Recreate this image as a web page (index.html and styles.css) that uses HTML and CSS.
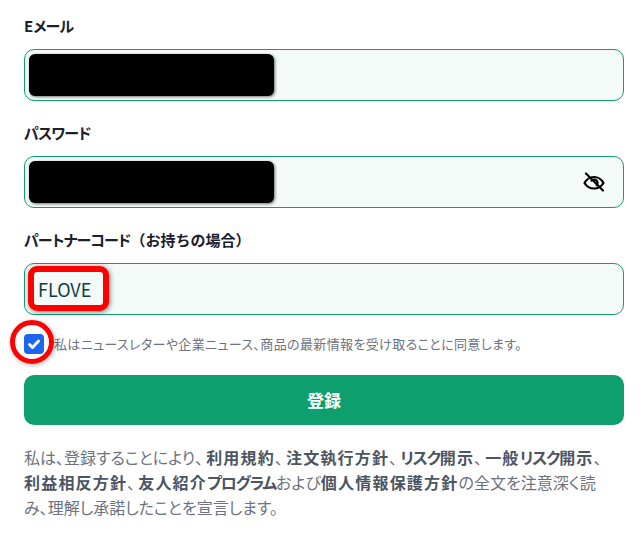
FILE: index.html
```html
<!DOCTYPE html>
<html lang="ja">
<head>
<meta charset="utf-8">
<title>登録</title>
<link rel="stylesheet" href="styles.css">
</head>
<body>
<form class="form">
  <div class="field">
    <label class="label">E<span class="kana">メール</span></label>
    <div class="input"><span class="redact"></span></div>
  </div>
  <div class="field">
    <label class="label"><span class="kana">パスワード</span></label>
    <div class="input">
      <span class="redact"></span>
      <svg class="eye" viewBox="0 0 24 24" width="24" height="24" fill="none" stroke="#000" stroke-width="2.200" stroke-linecap="round" stroke-linejoin="round">
        <path d="M2.500 13c2.200-4 5.500-6 9.500-6s7.300 2 9.500 6c-2.200 3.600-5.500 5.500-9.500 5.500s-7.300-1.900-9.500-5.500z"/>
        <path d="M9.500 10.700a3.400 3.400 0 0 1 5.200 4.600"/>
        <path d="M4 3.500 21 20.500"/>
      </svg>
    </div>
  </div>
  <div class="field">
    <label class="label"><span class="kana">パートナーコード</span>（お持ちの場合）</label>
    <div class="input code"><span class="code-text">FLOVE</span><span class="mark-box"></span></div>
  </div>
  <div class="consent">
    <span class="check">
      <svg viewBox="0 0 20 20" width="20" height="20" fill="none" stroke="#fff" stroke-width="3" stroke-linecap="round" stroke-linejoin="round"><path d="M5.500 10.500 8.500 13.500 14.500 7"/></svg>
      <span class="mark-circle"></span>
    </span>
    <span class="consent-text">私はニュースレターや企業ニュース、商品の最新情報を受け取ることに同意します。</span>
  </div>
  <button class="submit" type="button">登録</button>
  <p class="legal">私は、登録することにより<span class="sep">、</span><b>利用規約</b><span class="sep">、</span><b>注文執行方針</b><span class="sep">、</span><b><span class="kana">リスク</span>開示</b><span class="sep">、</span><b>一般<span class="kana">リスク</span>開示</b><span class="sep">、</span><b>利益相反方針</b><span class="sep">、</span><b>友人紹介<span class="kana">プログラム</span></b>および<b>個人情報保護方針</b>の全文を注意深く読み、理解し承諾したことを宣言します。</p>
</form>
</body>
</html>
```
FILE: styles.css
```css
* { box-sizing: border-box; }
html, body { margin: 0; padding: 0; background: #fff; }
body {
  width: 643px;
  height: 536px;
  overflow: hidden;
  font-family: "Noto Sans CJK JP", "Noto Sans", sans-serif;
  font-feature-settings: "palt";
}
.form { padding: 16px 19px 0 24px; }
.label {
  display: block;
  height: 33px;
  line-height: 20px;
  font-size: 15px;
  font-weight: 700;
  color: #1a202c;
  font-feature-settings: normal;
}
.kana {
  font-feature-settings: "palt";
  letter-spacing: -0.8px;
}
.input {
  position: relative;
  display: flex;
  align-items: center;
  justify-content: flex-end;
  height: 52px;
  margin-bottom: 22px;
  padding: 0 17px 0 13px;
  background: #f3faf7;
  border: 1px solid #0e9f6e;
  border-radius: 10px;
}
.redact {
  position: absolute;
  left: 4px;
  top: 4px;
  width: 245px;
  height: 42px;
  background: #000;
  border-radius: 6px;
  box-shadow: 1px 1px 3px rgba(0,0,0,.55);
}
.eye { display: block; }
.code { justify-content: flex-start; }
.code-text { font-size: 18px; color: #0f3f45; line-height: 24px; }
.mark-box {
  position: absolute;
  left: 3px;
  top: 2px;
  width: 81px;
  height: 45px;
  border: 6px solid #f00;
  border-radius: 9px;
  box-shadow: 1px 1px 5px rgba(0,0,0,.5);
}
.consent {
  display: flex;
  align-items: center;
  gap: 10px;
  height: 20px;
  margin-top: -3px;
}
.check {
  position: relative;
  flex: none;
  width: 20px;
  height: 20px;
  background: #1c64f2;
  border-radius: 4px;
}
.check svg { display: block; }
.mark-circle {
  position: absolute;
  left: -14px;
  top: -14px;
  width: 44px;
  height: 44px;
  border: 5px solid #f00;
  border-radius: 50%;
  box-shadow: 1px 1px 4px rgba(0,0,0,.35);
}
.consent-text {
  font-size: 13px;
  line-height: 20px;
  color: #6b7280;
  letter-spacing: 0.37px;
  white-space: nowrap;
}
.submit {
  display: block;
  width: 600px;
  height: 50px;
  margin-top: 21px;
  padding: 0 0 2px;
  background: #0e9f6e;
  border: 0;
  border-radius: 10px;
  color: #fff;
  font-family: inherit;
  font-size: 17px;
  font-weight: 700;
}
.legal {
  margin: 20px 0 0;
  width: 583px;
  font-size: 16px;
  line-height: 25px;
  letter-spacing: 0;
  color: #6b7280;
}
.legal b { font-weight: 700; color: #4b5563; letter-spacing: 1.2px; }
.legal .kana { letter-spacing: -1.2px; }
.legal .sep { letter-spacing: 3px; }
```
